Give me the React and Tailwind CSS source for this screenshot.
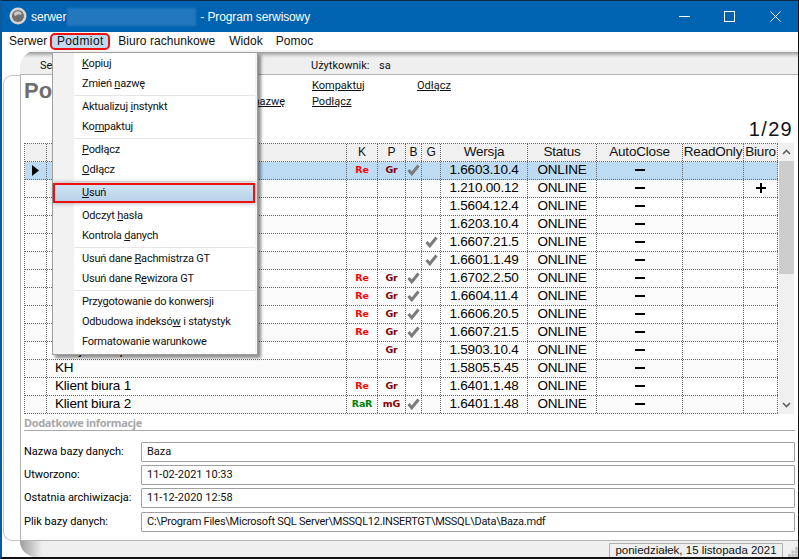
const T = "font-['Liberation_Sans',Arial,sans-serif]";
const R = "font-['Roboto',Arial,sans-serif]";

function Check() {
  return (
    <svg width="13" height="12" viewBox="0 0 13 12" className="block">
      <path d="M1.5 6 L4.8 9.8 L11.5 1.5" fill="none" stroke="#7c7c7c" strokeWidth="3" />
    </svg>
  );
}
const Dash = () => <span className="block w-[10px] h-[2px] bg-black" />;
const Plus = () => (
  <svg width="10" height="10" viewBox="0 0 10 10" className="block">
    <path d="M0 5H10M5 0V10" stroke="#000" strokeWidth="2" />
  </svg>
);

const cols = [22, 300, 31, 28, 16, 19, 87, 69, 86, 61, 34];
const rows = [
  ["", "Re", "Gr", 1, 0, "1.6603.10.4"],
  ["", "", "", 0, 0, "1.210.00.12", 1],
  ["", "", "", 0, 0, "1.5604.12.4"],
  ["", "", "", 0, 0, "1.6203.10.4"],
  ["", "", "", 0, 1, "1.6607.21.5"],
  ["", "", "", 0, 1, "1.6601.1.49"],
  ["", "Re", "Gr", 1, 0, "1.6702.2.50"],
  ["", "Re", "Gr", 1, 0, "1.6604.11.4"],
  ["", "Re", "Gr", 1, 0, "1.6606.20.5"],
  ["", "Re", "Gr", 1, 0, "1.6607.21.5"],
  ["Bar jakość pl", "", "Gr", 0, 0, "1.5903.10.4"],
  ["KH", "", "", 0, 0, "1.5805.5.45"],
  ["Klient biura 1", "Re", "Gr", 0, 0, "1.6401.1.48"],
  ["Klient biura 2", "RaR", "mG", 1, 0, "1.6401.1.48"],
];

function Cell({ i, className = "", children }) {
  return (
    <div
      style={{ width: cols[i] }}
      className={`h-full shrink-0 box-border border-r border-dotted border-[#666] flex items-center justify-center overflow-hidden whitespace-nowrap pb-[1px] ${className}`}
    >
      {children}
    </div>
  );
}

function Badge({ v, color }) {
  return <span className={`font-['DejaVu_Sans',sans-serif] font-bold text-[9.5px] tracking-[-0.2px] ${color}`}>{v}</span>;
}

function Row({ r, idx }) {
  const sel = idx === 0;
  const bg = sel ? "bg-[#bddcf4]" : idx % 2 === 1 ? "bg-[#fbfbfb]" : "bg-white";
  return (
    <div className={`flex h-[18px] box-border border-b border-dotted border-[#666] ${bg}`}>
      <Cell i={0}>
        {sel && (
          <svg width="7" height="11" viewBox="0 0 7 11" className="block">
            <path d="M0 0L7 5.5L0 11Z" fill="#000" />
          </svg>
        )}
      </Cell>
      <Cell i={1} className="!justify-start pl-[8px]">{r[0]}</Cell>
      <Cell i={2}><Badge v={r[1]} color={r[1] === "RaR" ? "text-[#008000]" : "text-[#ff0000]"} /></Cell>
      <Cell i={3}><Badge v={r[2]} color="text-[#800000]" /></Cell>
      <Cell i={4}>{r[3] ? <Check /> : null}</Cell>
      <Cell i={5}>{r[4] ? <Check /> : null}</Cell>
      <Cell i={6}>{r[5]}</Cell>
      <Cell i={7}>ONLINE</Cell>
      <Cell i={8}><Dash /></Cell>
      <Cell i={9} />
      <Cell i={10}>{r[6] ? <Plus /> : null}</Cell>
    </div>
  );
}

function Grid() {
  const heads = ["", "", "K", "P", "B", "G", "Wersja", "Status", "AutoClose", "ReadOnly", "Biuro"];
  return (
    <div className={`flex ${T} text-[13.5px] tracking-[-0.2px] text-black`}>
      <div className="w-[754px] box-border border-l border-t border-dotted border-[#666]">
        <div className="flex h-[18px] box-border border-b border-dotted border-[#666] bg-[#f0f0f0] text-[#111]">
          {heads.map((h, i) => (
            <Cell key={i} i={i} className={i >= 2 && i <= 5 ? "text-[12px]" : ""}>{h}</Cell>
          ))}
        </div>
        {rows.map((r, i) => <Row key={i} r={r} idx={i} />)}
      </div>
      <div className="ml-[1px] w-[15px] flex flex-col bg-[#f0f0f0]">
        <div className="h-[18px] flex items-center justify-center">
          <svg width="9" height="6" viewBox="0 0 9 6"><path d="M1 5L4.5 1.5L8 5" fill="none" stroke="#606060" strokeWidth="1.6" /></svg>
        </div>
        <div className="h-[113px] bg-[#cdcdcd]" />
        <div className="flex-1 flex items-end justify-center pb-[6px]">
          <svg width="9" height="6" viewBox="0 0 9 6"><path d="M1 1L4.5 4.5L8 1" fill="none" stroke="#606060" strokeWidth="1.6" /></svg>
        </div>
      </div>
    </div>
  );
}

function Item({ children, hot }) {
  return hot ? (
    <div className="h-[20px] mr-[2px] box-border border-2 border-[#f01010] pl-[27px] pt-[1px] flex items-center bg-[linear-gradient(to_bottom,#d0e3f3,#b6d2ea)] shadow-[0_0_5px_rgba(0,0,0,0.35)]">
      <span>{children}</span>
    </div>
  ) : (
    <div className="h-[20px] pl-[29px] pt-[1px] flex items-center"><span>{children}</span></div>
  );
}
const Sep = () => (
  <div className="h-[3px] ml-[21px] mr-[2px] flex items-center">
    <div className="w-full h-[1px] bg-[#e6e6e6]" />
  </div>
);

function Menu() {
  return (
    <div className={`absolute left-[50px] top-[51px] w-[206px] h-[303px] box-border border border-[#a0a0a0] pt-[1px] flex flex-col bg-[linear-gradient(to_right,#f2f2f2_21px,#ffffff_21px,#ffffff_202px,#f2f2f2_202px)] shadow-[3px_3px_3px_rgba(0,0,0,0.45)] ${R} text-[11px] tracking-[-0.2px] text-[#111]`}>
      <Item><u>K</u>opiuj</Item>
      <Item>Zmień <u>n</u>azwę</Item>
      <Sep />
      <Item>Aktualizuj <u>i</u>nstynkt</Item>
      <Item>Ko<u>m</u>paktuj</Item>
      <Sep />
      <Item><u>P</u>odłącz</Item>
      <Item><u>O</u>dłącz</Item>
      <Sep />
      <Item hot><u>U</u>suń</Item>
      <Sep />
      <Item>Odczyt <u>h</u>asła</Item>
      <Item>Kontrola <u>d</u>anych</Item>
      <Sep />
      <Item>Usuń dane <u>R</u>achmistrza GT</Item>
      <Item>Usuń dane R<u>e</u>wizora GT</Item>
      <Sep />
      <Item>Przy<u>g</u>otowanie do konwersji</Item>
      <Item>Odbudowa indeksó<u>w</u> i statystyk</Item>
      <Item>Formatowanie warunkowe</Item>
    </div>
  );
}

function Field({ label, value, mt = "mt-[3px]", tight = "" }) {
  return (
    <div className={`flex items-center ${mt}`}>
      <div className="w-[117px] shrink-0">{label}</div>
      <div className={`h-[20px] w-[654px] box-border border border-[#a0a0a0] rounded-[1px] flex items-center pl-[5px] text-[#111] ${tight}`}>{value}</div>
    </div>
  );
}

export default function App() {
  return (
    <div className={`relative w-[799px] h-[559px] box-border overflow-hidden flex flex-col bg-white border-t border-t-[#0a2a45] border-l-2 border-l-[#0b5a9e] border-r border-r-[#111] border-b-2 border-b-[#111] ${T} text-[12px] text-black`}>
      {/* title bar */}
      <div className="h-[31px] -mr-[1px] shrink-0 bg-[#0063b1] flex items-center text-white text-[12px] tracking-[-0.12px]">
        <svg width="18" height="18" viewBox="0 0 18 18" className="ml-[7px] mb-[1px]">
          <circle cx="9" cy="9" r="8.5" fill="#d5d5d5" />
          <circle cx="9" cy="9" r="6" fill="#707070" />
          <path d="M5 6C8 3 12 4 13 7C11 9 9 6 7 9C5 9 5 7 5 6Z" fill="#c9c9c9" />
        </svg>
        <span className="ml-[4px]">serwer</span>
        <div className="ml-[1px] w-[129px] h-[18px] bg-[#2378bd] blur-[1px]" />
        <span className="ml-[4px]">- Program serwisowy</span>
        <div className="ml-auto flex items-center">
          <svg width="11" height="11" viewBox="0 0 11 11" className="mr-[34px]"><path d="M0 5.5H11" stroke="#fff" /></svg>
          <svg width="11" height="11" viewBox="0 0 11 11" className="mr-[35px]"><rect x="0.5" y="0.5" width="10" height="10" fill="none" stroke="#fff" /></svg>
          <svg width="11" height="11" viewBox="0 0 11 11" className="mr-[18px]"><path d="M0.5 0.5L10.5 10.5M10.5 0.5L0.5 10.5" stroke="#fff" /></svg>
        </div>
      </div>

      {/* menu bar */}
      <div className="h-[18px] shrink-0 bg-white flex items-center tracking-[0.05px] text-[#111]">
        <span className="ml-[7px]">Serwer</span>
        <span className="ml-[3px] h-[17px] w-[60px] box-border border-2 border-[#ee1111] rounded-[5px] bg-[#c2daf0] flex items-center justify-center tracking-[0.4px]">Podmiot</span>
        <span className="ml-[8px]">Biuro rachunkowe</span>
        <span className="ml-[14px]">Widok</span>
        <span className="ml-[13px]">Pomoc</span>
      </div>

      {/* upper tab band */}
      <div className="h-[25px] shrink-0 flex bg-white">
        <div className="w-[18px] shrink-0" />
        <div className={`flex-1 box-border border-b border-[#b4b4b4] rounded-tl-[18px] bg-[linear-gradient(to_bottom,#f4f4f4_0px,#f4f4f4_2px,#9a9a9a_2px,#dcdcdc_6px,#efefef_8px)] flex items-end pb-[1px] ${R} text-[11px] leading-[14px] text-[#111]`}>
          <span className="ml-[20px] w-[271px]">Serwer</span>
          <span className="w-[68px]">Użytkownik:</span>
          <span>sa</span>
        </div>
      </div>

      {/* main area */}
      <div className="flex-1 min-h-0 flex bg-white">
        <div className="w-[18px] shrink-0 bg-white">
          <div className="h-full ml-[1px] box-border border-l border-t border-b border-[#c4c4c4] rounded-l-[9px]" />
        </div>
        <div className="flex-1 min-w-0 box-border border-l border-b border-[#b4b4b4] pl-[3px] flex flex-col">
          {/* title + links */}
          <div className="h-[68px] shrink-0 flex flex-col">
            <div className={`flex pt-[3px] ${R} text-[11px]`}>
              <div className={`w-[196px] ${T} font-bold text-[22px] leading-[26px] text-[#6e6e6e] whitespace-nowrap overflow-hidden`}>Podmioty</div>
              <div className="w-[92px] flex flex-col leading-[16px] underline text-[#111]">
                <span>Kopiuj</span>
                <span>Zmień nazwę</span>
              </div>
              <div className="w-[105px] flex flex-col leading-[16px] underline text-[#111]">
                <span>Kompaktuj</span>
                <span>Podłącz</span>
              </div>
              <div className="leading-[16px] underline text-[#111]">Odłącz</div>
            </div>
            <div className="mt-auto flex justify-end pr-[5px] pb-[2px] text-[20px] tracking-[1.3px] leading-[23px] text-[#111]">1/29</div>
          </div>

          <Grid />

          {/* details */}
          <div className="h-[17px] shrink-0 box-border border-b border-[#aaa] mr-[3px] font-['Noto_Sans',sans-serif] font-bold text-[11px] tracking-[-0.35px] text-[#a8a8a8] leading-[17px]">Dodatkowe informacje</div>
          <div className={`flex flex-col ${R} text-[11px]`}>
            <Field mt="mt-[11px]" label="Nazwa bazy danych:" value="Baza" />
            <Field label="Utworzono:" value="11-02-2021 10:33" />
            <Field label="Ostatnia archiwizacja:" value="11-12-2020 12:58" />
            <Field mt="mt-[4px]" tight="tracking-[-0.24px]" label="Plik bazy danych:" value="C:\Program Files\Microsoft SQL Server\MSSQL12.INSERTGT\MSSQL\Data\Baza.mdf" />
          </div>
        </div>
      </div>

      {/* bottom band */}
      <div className="h-[16px] shrink-0 flex bg-white">
        <div className="w-[18px] shrink-0" />
        <div className="flex-1 rounded-bl-[18px] bg-[linear-gradient(to_right,#9c9c9c,#efefef_22px)] flex justify-end items-end">
          <div className="h-[14px] w-[174px] box-border border border-b-0 border-[#b0b0b0] flex items-center justify-center whitespace-nowrap text-[11.5px] text-[#111]">poniedziałek, 15 listopada 2021</div>
          <div className="w-[15px] h-full flex items-end justify-end">
            <svg width="10" height="10" viewBox="0 0 10 10">
              <path d="M7 0h3v3H7zM3.500 3.500h3v3h-3zM7 3.500h3v3H7zM0 7h3v3H0zM3.500 7h3v3h-3zM7 7h3v3H7z" fill="#c4c4c4" />
            </svg>
          </div>
        </div>
      </div>

      <Menu />
    </div>
  );
}
